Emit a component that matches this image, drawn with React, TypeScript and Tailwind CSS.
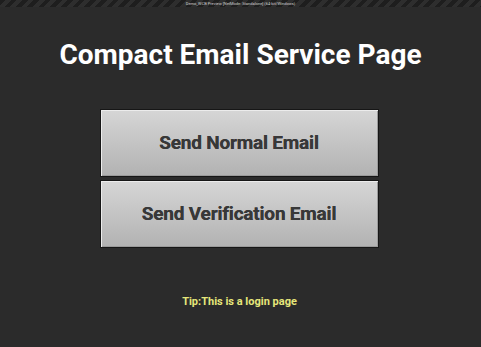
import React from 'react'

const EmailButton: React.FC<{ label: string }> = ({ label }) => (
  <button className="w-[279px] h-[68px] border border-[#161616] bg-gradient-to-b from-[#d6d6d6] to-[#b2b2b2] shadow-[inset_1px_1px_0_#ececec,inset_-1px_-1px_0_#9a9a9a] flex items-center justify-center">
    <span className="text-[19px] font-bold text-[#383838] tracking-[-0.2px] [text-shadow:0_0_0.6px_#383838]">
      {label}
    </span>
  </button>
)

export default function App() {
  return (
    <div
      className="w-[481px] h-[347px] bg-[#2b2b2b] flex flex-col overflow-hidden"
      style={{ fontFamily: 'Roboto, "Liberation Sans", sans-serif' }}
    >
      <div className="h-[7px] bg-[repeating-linear-gradient(135deg,#1e1e1e_0px,#1e1e1e_4px,#2e2e2e_4px,#2e2e2e_8px)] flex items-center justify-center">
        <span className="text-[4px] leading-none text-[#cfcfcf]">
          Demo_WCB Preview [NetMode: Standalone] (64-bit/Windows)
        </span>
      </div>
      <h1 className="mt-[31px] text-center text-[28px] leading-[34px] font-bold text-white">
        Compact Email Service Page
      </h1>
      <div className="mt-[37px] flex flex-col items-center gap-[3px] -ml-[3px]">
        <EmailButton label="Send Normal Email" />
        <EmailButton label="Send Verification Email" />
      </div>
      <p className="mt-[46px] text-center text-[11px] font-bold text-[#e6e67a] -ml-[2px]">
        Tip:This is a login page
      </p>
    </div>
  )
}
